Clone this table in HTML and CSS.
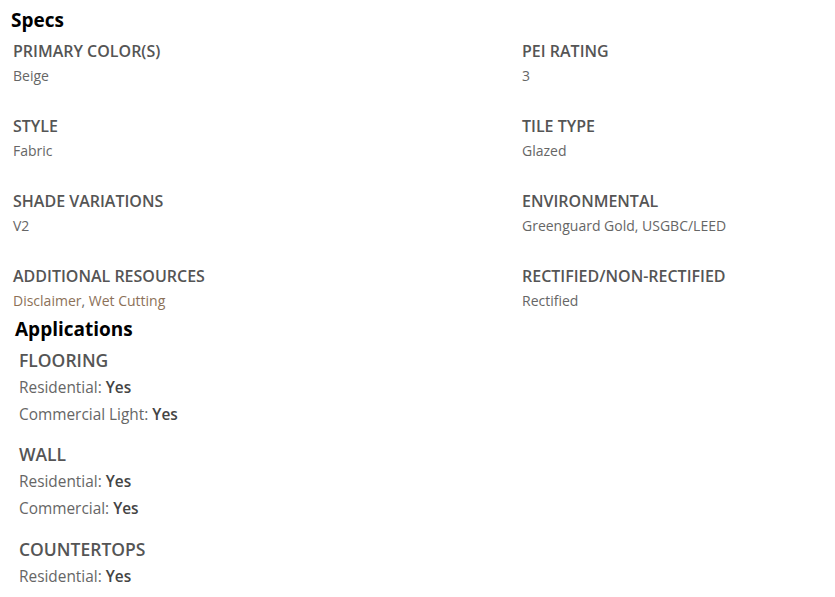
FILE: index.html
```html
<!DOCTYPE html>
<html>
<head>
<meta charset="utf-8">
<link rel="stylesheet" href="styles.css">
</head>
<body>
<section class="specs">
  <h2 class="title">Specs</h2>
  <div class="grid">
    <div class="item"><div class="label">PRIMARY COLOR(S)</div><div class="value">Beige</div></div>
    <div class="item"><div class="label">PEI RATING</div><div class="value">3</div></div>
    <div class="item"><div class="label">STYLE</div><div class="value">Fabric</div></div>
    <div class="item"><div class="label">TILE TYPE</div><div class="value">Glazed</div></div>
    <div class="item"><div class="label">SHADE VARIATIONS</div><div class="value">V2</div></div>
    <div class="item"><div class="label">ENVIRONMENTAL</div><div class="value">Greenguard Gold, USGBC/LEED</div></div>
    <div class="item"><div class="label">ADDITIONAL RESOURCES</div><div class="value"><a class="link" href="#">Disclaimer</a>, <a class="link" href="#">Wet Cutting</a></div></div>
    <div class="item"><div class="label">RECTIFIED/NON-RECTIFIED</div><div class="value">Rectified</div></div>
  </div>
</section>
<section class="apps">
  <h2 class="title apps-title">Applications</h2>
  <div class="group">
    <h3 class="group-title">FLOORING</h3>
    <div class="row">Residential: <b>Yes</b></div>
    <div class="row">Commercial Light: <b>Yes</b></div>
  </div>
  <div class="group">
    <h3 class="group-title">WALL</h3>
    <div class="row">Residential: <b>Yes</b></div>
    <div class="row">Commercial: <b>Yes</b></div>
  </div>
  <div class="group">
    <h3 class="group-title">COUNTERTOPS</h3>
    <div class="row">Residential: <b>Yes</b></div>
  </div>
</section>
</body>
</html>
```
FILE: styles.css
```css
* { box-sizing: border-box; }
body {
  margin: 0;
  padding: 8px 0 0 0;
  font-family: "Open Sans", sans-serif;
  background: #fff;
  color: #666;
}
.title {
  margin: 0;
  padding-left: 11px;
  font-size: 19px;
  line-height: 24px;
  font-weight: 700;
  color: #000;
}
.grid {
  margin-top: 7px;
  padding-left: 13px;
  display: grid;
  grid-template-columns: 509px 1fr;
  row-gap: 25px;
}
.label {
  font-size: 16px;
  line-height: 24px;
  font-weight: 600;
  color: #555;
}
.value {
  font-size: 14px;
  line-height: 26px;
  color: #666;
}
.link {
  color: #8c7158;
  text-decoration: none;
}
.apps { margin-top: 3px; }
.apps-title { padding-left: 15px; }
.group { padding-left: 19px; margin-top: 5.5px; }
.group + .group { margin-top: 13.5px; }
.group-title {
  margin: 0;
  font-size: 17.5px;
  line-height: 27px;
  font-weight: 600;
  color: #555;
}
.row {
  font-size: 15.4px;
  line-height: 27px;
  color: #666;
}
.row b { font-weight: 600; color: #444; }
```
